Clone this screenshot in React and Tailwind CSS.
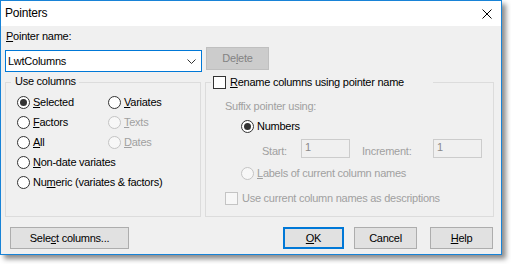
import React from "react";

function Radio({ children, checked, disabled }) {
    return (
        <div className={"h-[20px] flex items-center gap-[3px] " + (disabled ? "text-[#a0a0a0]" : "text-black")}>
            <span
                className={
                    "w-[13px] h-[13px] rounded-full border flex items-center justify-center " +
                    (disabled ? "border-[#c4c4c4] bg-[#f7f7f7]" : "border-[#333333] bg-white")
                }
            >
                {checked && <span className="w-[7px] h-[7px] rounded-full bg-[#333333]" />}
            </span>
            <span>{children}</span>
        </div>
    );
}

function Button({ children, width, def, className = "" }) {
    return (
        <div
            className={
                "h-[22px] flex items-center justify-center bg-[#e1e1e1] " +
                (def ? "border-2 border-[#0078d7] " : "border border-[#adadad] ") +
                width +
                " " +
                className
            }
        >
            {children}
        </div>
    );
}

export default function App() {
    return (
        <div className="w-[511px] h-[264px] bg-white font-['Liberation_Sans',Arial,sans-serif] text-[11px] tracking-[-0.25px] leading-[13px] text-black">
            <div className="w-[502px] h-[255px] border border-[#1883d7] bg-[#f0f0f0] shadow-[4px_4px_5px_rgba(0,0,0,0.45)] flex flex-col">
                {/* title bar */}
                <div className="h-[25px] shrink-0 bg-white flex items-center justify-between pl-[4px] pr-[9px]">
                    <span className="text-[12px] tracking-[-0.2px]">Pointers</span>
                    <svg width="10" height="10" viewBox="0 0 10 10">
                        <path d="M0.5 0.5L9.5 9.5M9.5 0.5L0.5 9.5" stroke="#000" strokeWidth="1" />
                    </svg>
                </div>

                <div className="flex-1 flex flex-col px-[4px] pt-[4px]">
                    <div className="ml-[1px] h-[13px]">
                        <u>P</u>ointer name:
                    </div>
                    <div className="mt-[4px] flex items-start">
                        <div className="mt-[3px] w-[197px] h-[22px] border border-[#0078d7] bg-white flex items-center justify-between pl-[2px] pr-[5px]">
                            <span>LwtColumns</span>
                            <svg width="9" height="5" viewBox="0 0 9 5">
                                <path d="M0.5 0.5L4.5 4.5L8.5 0.5" fill="none" stroke="#333" strokeWidth="1" />
                            </svg>
                        </div>
                        <div className="ml-[4px] w-[63px] h-[23px] border border-[#bfbfbf] bg-[#cccccc] text-[#838383] flex items-center justify-center">
                            De<u>l</u>ete
                        </div>
                    </div>

                    <div className="mt-[10px] flex gap-[4px]">
                        {/* Use columns */}
                        <div className="relative w-[196px] h-[135px] border border-[#dcdcdc] pt-[9px] pl-[11px]">
                            <div className="absolute left-[5px] -top-[8px] bg-[#f0f0f0] pl-[4px] pr-[3px]">Use columns</div>
                            <div className="grid grid-cols-[91px_auto]">
                                <Radio checked>
                                    <u>S</u>elected
                                </Radio>
                                <Radio>
                                    <u>V</u>ariates
                                </Radio>
                                <Radio>
                                    <u>F</u>actors
                                </Radio>
                                <Radio disabled>
                                    <u>T</u>exts
                                </Radio>
                                <Radio>
                                    <u>A</u>ll
                                </Radio>
                                <Radio disabled>
                                    <u>D</u>ates
                                </Radio>
                                <div className="col-span-2">
                                    <Radio>
                                        <u>N</u>on-date variates
                                    </Radio>
                                </div>
                                <div className="col-span-2">
                                    <Radio>
                                        Nu<u>m</u>eric (variates &amp; factors)
                                    </Radio>
                                </div>
                            </div>
                        </div>

                        {/* Rename */}
                        <div className="relative w-[289px] h-[135px] border border-[#dcdcdc] pt-[17px] pl-[19px] flex flex-col">
                            <div className="absolute left-[5px] -top-[8px] w-[222px] h-[14px] bg-[#f0f0f0] pl-[2px] flex items-center gap-[4px]">
                                <span className="w-[13px] h-[13px] border border-[#333333] bg-white" />
                                <span>
                                    <u>R</u>ename columns using pointer name
                                </span>
                            </div>
                            <div className="h-[13px] text-[#a0a0a0]">Suffix pointer using:</div>
                            <div className="mt-[3px] ml-[16px]">
                                <Radio checked>Numbers</Radio>
                            </div>
                            <div className="mt-[3px] ml-[37px] h-[19px] flex items-end text-[#a0a0a0]">
                                <span className="w-[39px]">Start:</span>
                                <div className="w-[49px] h-[19px] border border-[#cccccc] pl-[3px] pt-[1px] text-[#8a8a8a]">1</div>
                                <span className="ml-[12px] w-[71px]">Increment:</span>
                                <div className="w-[49px] h-[19px] border border-[#cccccc] pl-[3px] pt-[1px] text-[#8a8a8a]">1</div>
                            </div>
                            <div className="mt-[5px] ml-[16px]">
                                <Radio disabled>
                                    <u>L</u>abels of current column names
                                </Radio>
                            </div>
                            <div className="mt-[8px] h-[14px] flex items-center gap-[4px] text-[#a0a0a0]">
                                <span className="w-[13px] h-[13px] border border-[#c4c4c4] bg-[#f7f7f7]" />
                                <span>Use current column names as descriptions</span>
                            </div>
                        </div>
                    </div>

                    <div className="mt-[10px] flex items-center">
                        <Button width="w-[119px]" className="ml-[5px]">
                            Sele<u>c</u>t columns...
                        </Button>
                        <Button width="w-[61px]" def className="ml-auto">
                            <u>O</u>K
                        </Button>
                        <Button width="w-[63px]" className="ml-[10px]">
                            Cancel
                        </Button>
                        <Button width="w-[63px]" className="ml-[13px] mr-[4px]">
                            <u>H</u>elp
                        </Button>
                    </div>
                </div>
            </div>
        </div>
    );
}
